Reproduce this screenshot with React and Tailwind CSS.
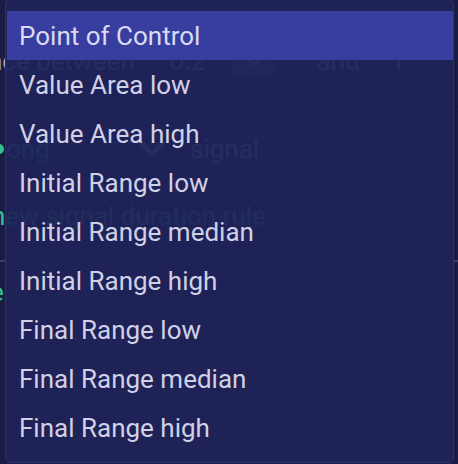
import React from "react";

const items = [
  "Point of Control",
  "Value Area low",
  "Value Area high",
  "Initial Range low",
  "Initial Range median",
  "Initial Range high",
  "Final Range low",
  "Final Range median",
  "Final Range high",
];

function Chevron({ className }) {
  return (
    <svg viewBox="0 0 24 24" className={className} fill="none" stroke="currentColor" strokeWidth="3" strokeLinecap="round" strokeLinejoin="round">
      <path d="M6 9l6 6 6-6" />
    </svg>
  );
}

export default function App() {
  return (
    <div
      className="relative w-[458px] h-[464px] overflow-hidden bg-[#1b1c44] text-[26px]"
      style={{ fontFamily: "Roboto, 'Liberation Sans', sans-serif" }}
    >
      {/* underlying page */}
      <div className="flex flex-col">
        <div className="h-[107px] flex items-center ml-[-12px] pt-[16px] gap-[14px] text-[#a4a6c2] border-b border-[#15163a]">
          <span>nce between</span>
          <div className="flex items-center h-[54px] w-[144px] border border-[#3a3d6e] rounded-[6px] pl-[20px] gap-[26px]">
            <span>0.2</span>
            <div className="w-[44px] h-[27px] bg-[#4a4d80] flex items-center justify-center text-[#a4a6c2]">
              <Chevron className="w-[26px] h-[26px]" />
            </div>
          </div>
          <span className="ml-[10px]">and</span>
          <div className="h-[54px] w-[60px] border border-[#3a3d6e] rounded-[6px] flex items-center pl-[16px]">1</div>
        </div>
        <div className="h-[155px] flex flex-col border-b-2 border-[#3b3d5e]">
          <div className="h-[84px] flex items-center">
            <div className="flex items-center h-[70px] w-[184px] ml-[-6px] border-r border-[#3a3d6e]">
              <span className="w-[10px] h-[10px] rounded-full bg-[#34c38f] mr-[2px]"></span>
              <span className="text-[#34c38f]">ong</span>
              <Chevron className="w-[40px] h-[40px] ml-[82px] text-[#a4a6c2]" />
            </div>
            <span className="ml-[12px] text-[#a4a6c2]">signal</span>
          </div>
          <div className="h-[50px] flex items-center ml-[-9px] text-[#34c38f]">new signal duration rule</div>
        </div>
        <div className="h-[60px] flex items-center ml-[-10px] text-[#34c38f]">e</div>
      </div>

      {/* dropdown menu */}
      <div className="absolute left-[5px] top-[-1px] w-[449px] h-[464px] rounded-[5px] border border-[#2e3168] bg-[#1f2258]/[0.93] pt-[11px] pb-[10px] pl-[1px]">
        {items.map((label, i) => (
          <div
            key={label}
            className={
              i === 0
                ? "h-[49px] flex items-center pl-[12px] pt-[1px] bg-[#383e9f] text-[#dadaf0]"
                : "h-[49px] flex items-center pl-[12px] pt-[1px] text-[#d0d1e6]"
            }
          >
            {label}
          </div>
        ))}
      </div>
    </div>
  );
}
